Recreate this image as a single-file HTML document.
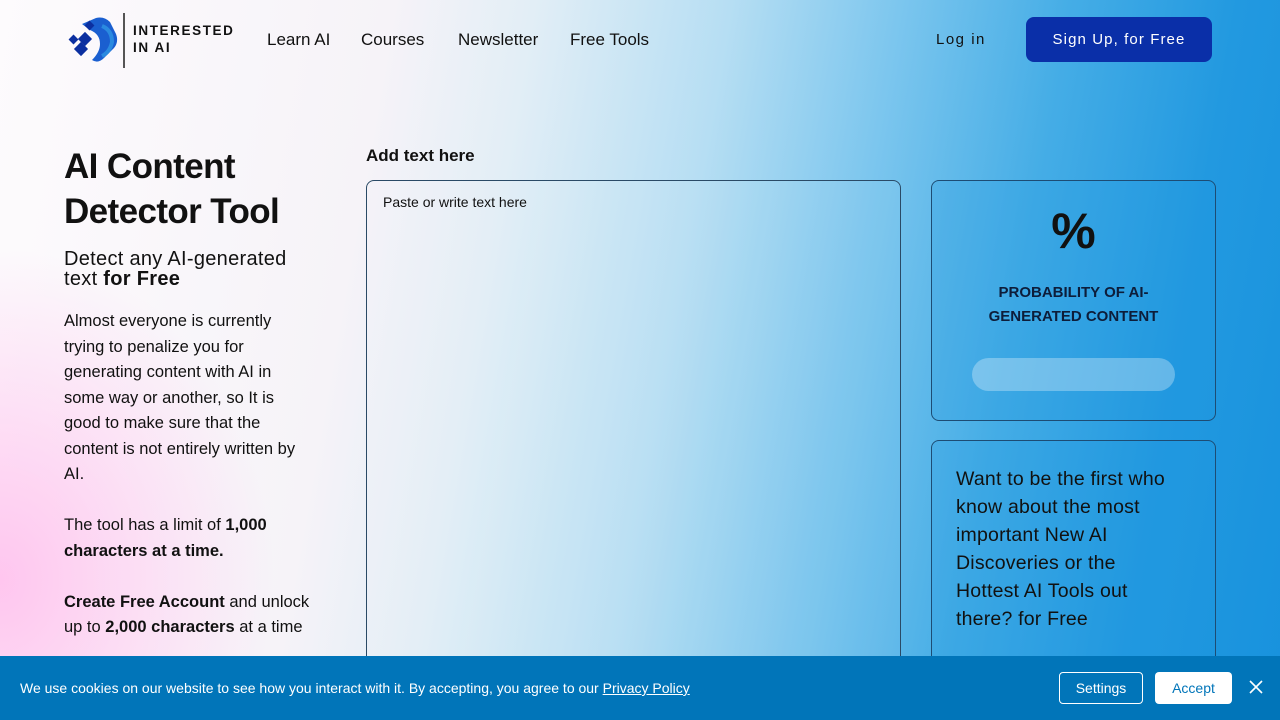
<!DOCTYPE html>
<html><head><meta charset="utf-8">
<style>
*{box-sizing:border-box;margin:0;padding:0}
body{width:1280px;height:720px;overflow:hidden;font-family:"Liberation Sans",sans-serif;color:#111;position:relative;
background:
radial-gradient(ellipse 380px 460px at 0px 580px, rgba(255,195,238,0.95), rgba(255,200,240,0) 72%),
linear-gradient(100deg,#fdfbfd 0%,#f6f3f8 28%,#e2eef6 38%,#b6def3 52%,#7cc6ee 64%,#45ade6 76%,#2299e0 88%,#1892dd 100%);}
.nav{position:absolute;top:0;left:0;width:1280px;height:80px}
.nav a{position:absolute;top:30px;font-size:17px;color:#111;text-decoration:none}
.login{position:absolute;left:936px;top:31px;font-size:15px;letter-spacing:1.5px;color:#111}
.signup{position:absolute;left:1026px;top:17px;width:186px;height:45px;background:#0a2fa8;border-radius:8px;color:#fff;font-size:15px;letter-spacing:1.1px;text-align:center;line-height:45px}
h1{position:absolute;left:64px;top:144px;font-size:35px;line-height:45px;font-weight:bold;letter-spacing:-0.6px}
.sub{position:absolute;left:64px;top:249px;font-size:20px;line-height:20px;letter-spacing:0.3px}
.body{position:absolute;left:64px;top:309px;width:280px;font-size:16.5px;line-height:25.5px;white-space:nowrap}
.lbl{position:absolute;left:366px;top:146px;font-size:17px;font-weight:bold}
.ta{position:absolute;left:366px;top:180px;width:535px;height:500px;border:1px solid #2a4a66;border-radius:8px;background:rgba(255,255,255,0.05)}
.ta span{position:absolute;left:16px;top:13px;font-size:14px}
.card{position:absolute;left:931px;width:285px;border:1px solid #1d4c74;border-radius:8px;background:rgba(30,150,225,0.25)}
.c1{top:180px;height:241px;text-align:center}
.pct{margin-top:20px;font-size:50px;line-height:60px;font-weight:bold}
.prob{margin-top:20px;font-size:15px;font-weight:bold;line-height:24px;color:#0d1d3a}
.bar{position:absolute;left:40px;top:177px;width:203px;height:33px;border-radius:17px;background:rgba(255,255,255,0.3)}
.c2{top:440px;height:260px}
.c2 p{padding:24px 24px;font-size:19.5px;line-height:28px;color:#111;white-space:nowrap;letter-spacing:0.2px}
.cookie{position:absolute;left:0;top:656px;width:1280px;height:64px;background:#0175b9;color:#fff;font-size:14px}
.cookie .t{position:absolute;left:20px;top:24px}
.cookie u{color:#fff}
.btn1{position:absolute;left:1059px;top:672px;width:84px;height:32px;border:1px solid #fff;border-radius:4px;color:#fff;text-align:center;line-height:30px;font-size:14px}
.btn2{position:absolute;left:1155px;top:672px;width:77px;height:32px;background:#fff;border-radius:4px;color:#0175b9;text-align:center;line-height:32px;font-size:14px}
.x{position:absolute;left:1248px;top:679px}
</style></head><body>
<div class="nav">
<svg style="position:absolute;left:66px;top:16px" width="54" height="48" viewBox="0 0 54 48">
<path d="M16 8 L30 2 Q38 0 44 6 L50 18 Q53 26 48 32 L38 42 Q32 48 26 44 Q34 36 34 28 Q34 18 24 14 Z" fill="#1a5fd0"/>
<path d="M36 10 Q46 14 46 26 Q44 36 36 40" fill="none" stroke="#2a8ae0" stroke-width="4"/>
<rect x="14" y="18" width="10" height="10" fill="#0b2fa0" transform="rotate(45 19 23)"/>
<rect x="4" y="20" width="7" height="7" fill="#0b2fa0" transform="rotate(45 7.5 23.5)"/>
<rect x="10" y="28" width="10" height="10" fill="#0b2fa0" transform="rotate(45 15 33)"/>
<rect x="20" y="6" width="7" height="7" fill="#0b2fa0" transform="rotate(45 23.5 9.5)"/>
</svg>
<div style="position:absolute;left:123px;top:13px;width:2px;height:55px;background:#555"></div>
<div style="position:absolute;left:133px;top:22px;font-family:'Liberation Sans',sans-serif;font-size:13.5px;font-weight:bold;letter-spacing:1.6px;line-height:17px">INTERESTED<br>IN AI</div>
<a style="left:267px">Learn AI</a>
<a style="left:361px">Courses</a>
<a style="left:458px">Newsletter</a>
<a style="left:570px">Free Tools</a>
<div class="login">Log in</div>
<div class="signup">Sign Up, for Free</div>
</div>
<h1>AI Content<br>Detector Tool</h1>
<div class="sub">Detect any AI-generated<br>text <b>for Free</b></div>
<div class="body">Almost everyone is currently<br>trying to penalize you for<br>generating content with AI in<br>some way or another, so It is<br>good to make sure that the<br>content is not entirely written by<br>AI.<br><br>The tool has a limit of <b>1,000</b><br><b>characters at a time.</b><br><br><b>Create Free Account</b> and unlock<br>up to <b>2,000 characters</b> at a time</div>
<div class="lbl">Add text here</div>
<div class="ta"><span>Paste or write text here</span></div>
<div class="card c1"><div class="pct">%</div><div class="prob">PROBABILITY OF AI-<br>GENERATED CONTENT</div><div class="bar"></div></div>
<div class="card c2"><p>Want to be the first who<br>know about the most<br>important New AI<br>Discoveries or the<br>Hottest AI Tools out<br>there? for Free</p></div>
<div class="cookie"><div class="t">We use cookies on our website to see how you interact with it. By accepting, you agree to our <u>Privacy Policy</u></div></div>
<div class="btn1">Settings</div>
<div class="btn2">Accept</div>
<svg class="x" width="16" height="16" viewBox="0 0 16 16"><path d="M2 2L14 14M14 2L2 14" stroke="#fff" stroke-width="1.6"/></svg>
</body></html>
